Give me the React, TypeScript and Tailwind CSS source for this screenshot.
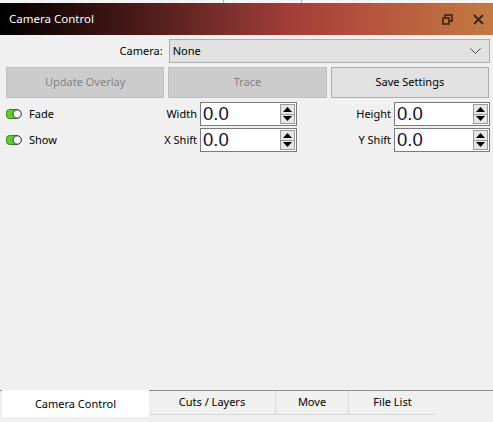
import React from "react";

const font = { fontFamily: '"Noto Sans", "Open Sans", Arial, sans-serif' };

const Toggle = () => (
  <svg width="16" height="10" viewBox="0 0 16 10" className="shrink-0">
    <rect x="0.5" y="0.5" width="13" height="9" rx="3" fill="#5ccf2e" stroke="#3b7d22" />
    <circle cx="11.2" cy="5" r="4.2" fill="#f4f4f4" stroke="#2e2e2e" />
  </svg>
);

const SpinBox = () => (
  <div className="flex h-[24px] items-stretch border border-[#7a7a7a] bg-white">
    <div
      className="flex-1 pl-[2px] text-[18.5px] leading-[22px] text-[#10103a]"
      style={{ fontFamily: '"Liberation Sans", Arial, sans-serif' }}
    >
      0.0
    </div>
    <div className="my-[1px] mr-[1px] flex w-[15px] flex-col border border-[#9a9a9a] bg-[#e6e6e6]">
      <div className="flex flex-1 items-center justify-center border-b border-[#9a9a9a]">
        <svg width="9" height="5" viewBox="0 0 9 5">
          <polygon points="4.5,0 9,5 0,5" fill="#000" />
        </svg>
      </div>
      <div className="flex flex-1 items-center justify-center">
        <svg width="9" height="5" viewBox="0 0 9 5">
          <polygon points="0,0 9,0 4.5,5" fill="#000" />
        </svg>
      </div>
    </div>
  </div>
);

const Row = ({ check, a, b }: { check: string; a: string; b: string }) => (
  <div className="grid grid-cols-[191px_97px_1fr_96px] items-center gap-x-[3px]">
    <div className="flex items-center justify-between">
      <div className="flex items-center gap-[7px]">
        <Toggle />
        <span>{check}</span>
      </div>
      <span>{a}</span>
    </div>
    <SpinBox />
    <div className="text-right">{b}</div>
    <SpinBox />
  </div>
);

export default function App() {
  return (
    <div className="flex h-[422px] w-[493px] flex-col bg-[#f0f0f0] text-[11px] text-black" style={font}>
      <div className="flex h-[3px] bg-[#f4f4f4]">
        <div className="w-[224px] border-r border-[#b4b4b4]" />
        <div className="w-[78px] border-r border-[#b4b4b4]" />
      </div>
      <div className="flex h-[32px] items-center justify-between bg-[linear-gradient(to_right,#000000_0%,#4a1a18_28%,#7a2e2b_45%,#a23d38_58%,#b4543d_75%,#c47a42_100%)] pl-[9px] pr-[9px]">
        <span className="text-[11.5px] text-white">Camera Control</span>
        <div className="flex items-center gap-[20px]">
          <svg width="11" height="11" viewBox="0 0 11 11">
            <rect x="3" y="1" width="7" height="6" fill="none" stroke="#3a2518" strokeWidth="1.6" />
            <rect x="1" y="4" width="6" height="6" fill="#c06f40" stroke="#3a2518" strokeWidth="1.6" />
          </svg>
          <svg width="11" height="11" viewBox="0 0 11 11">
            <path d="M1 1 L10 10 M10 1 L1 10" stroke="#3a2518" strokeWidth="1.8" />
          </svg>
        </div>
      </div>

      <div className="flex flex-1 flex-col pl-[6px] pr-[3px] pt-[4px]">
        <div className="grid grid-cols-3 items-center gap-x-[4px]">
          <div className="pr-[2px] text-right">Camera:</div>
          <div className="col-span-2 flex h-[24px] items-center justify-between border border-[#adadad] bg-[#e1e1e1] pl-[3px] pr-[8px]">
            <span>None</span>
            <svg width="11" height="6" viewBox="0 0 11 6">
              <path d="M0.5 0.5 L5.5 5.5 L10.5 0.5" fill="none" stroke="#444" strokeWidth="1" />
            </svg>
          </div>
        </div>

        <div className="mt-[4px] grid grid-cols-3 gap-x-[4px] pr-[1px]">
          <div className="flex h-[31px] items-center justify-center border border-[#bfbfbf] bg-[#cccccc] text-[#838383]">
            Update Overlay
          </div>
          <div className="flex h-[31px] items-center justify-center border border-[#bfbfbf] bg-[#cccccc] text-[#838383]">
            Trace
          </div>
          <div className="flex h-[31px] items-center justify-center border border-[#adadad] bg-[#e1e1e1]">
            Save Settings
          </div>
        </div>

        <div className="mt-[4px] flex flex-col gap-[2px]">
          <Row check="Fade" a="Width" b="Height" />
          <Row check="Show" a="X Shift" b="Y Shift" />
        </div>
      </div>

      <div className="mb-[5px] flex h-[27px] items-start border-t border-[#909090]">
        <div className="ml-[2px] -mt-[1px] flex h-[27px] w-[147px] items-center justify-center bg-white pt-[2px]">
          Camera Control
        </div>
        <div className="flex h-[24px] w-[127px] items-center justify-center border-b border-r border-[#d9d9d9]">
          Cuts / Layers
        </div>
        <div className="flex h-[24px] w-[73px] items-center justify-center border-b border-r border-[#d9d9d9]">
          Move
        </div>
        <div className="flex h-[24px] w-[87px] items-center justify-center border-b border-[#d9d9d9]">
          File List
        </div>
      </div>
    </div>
  );
}
